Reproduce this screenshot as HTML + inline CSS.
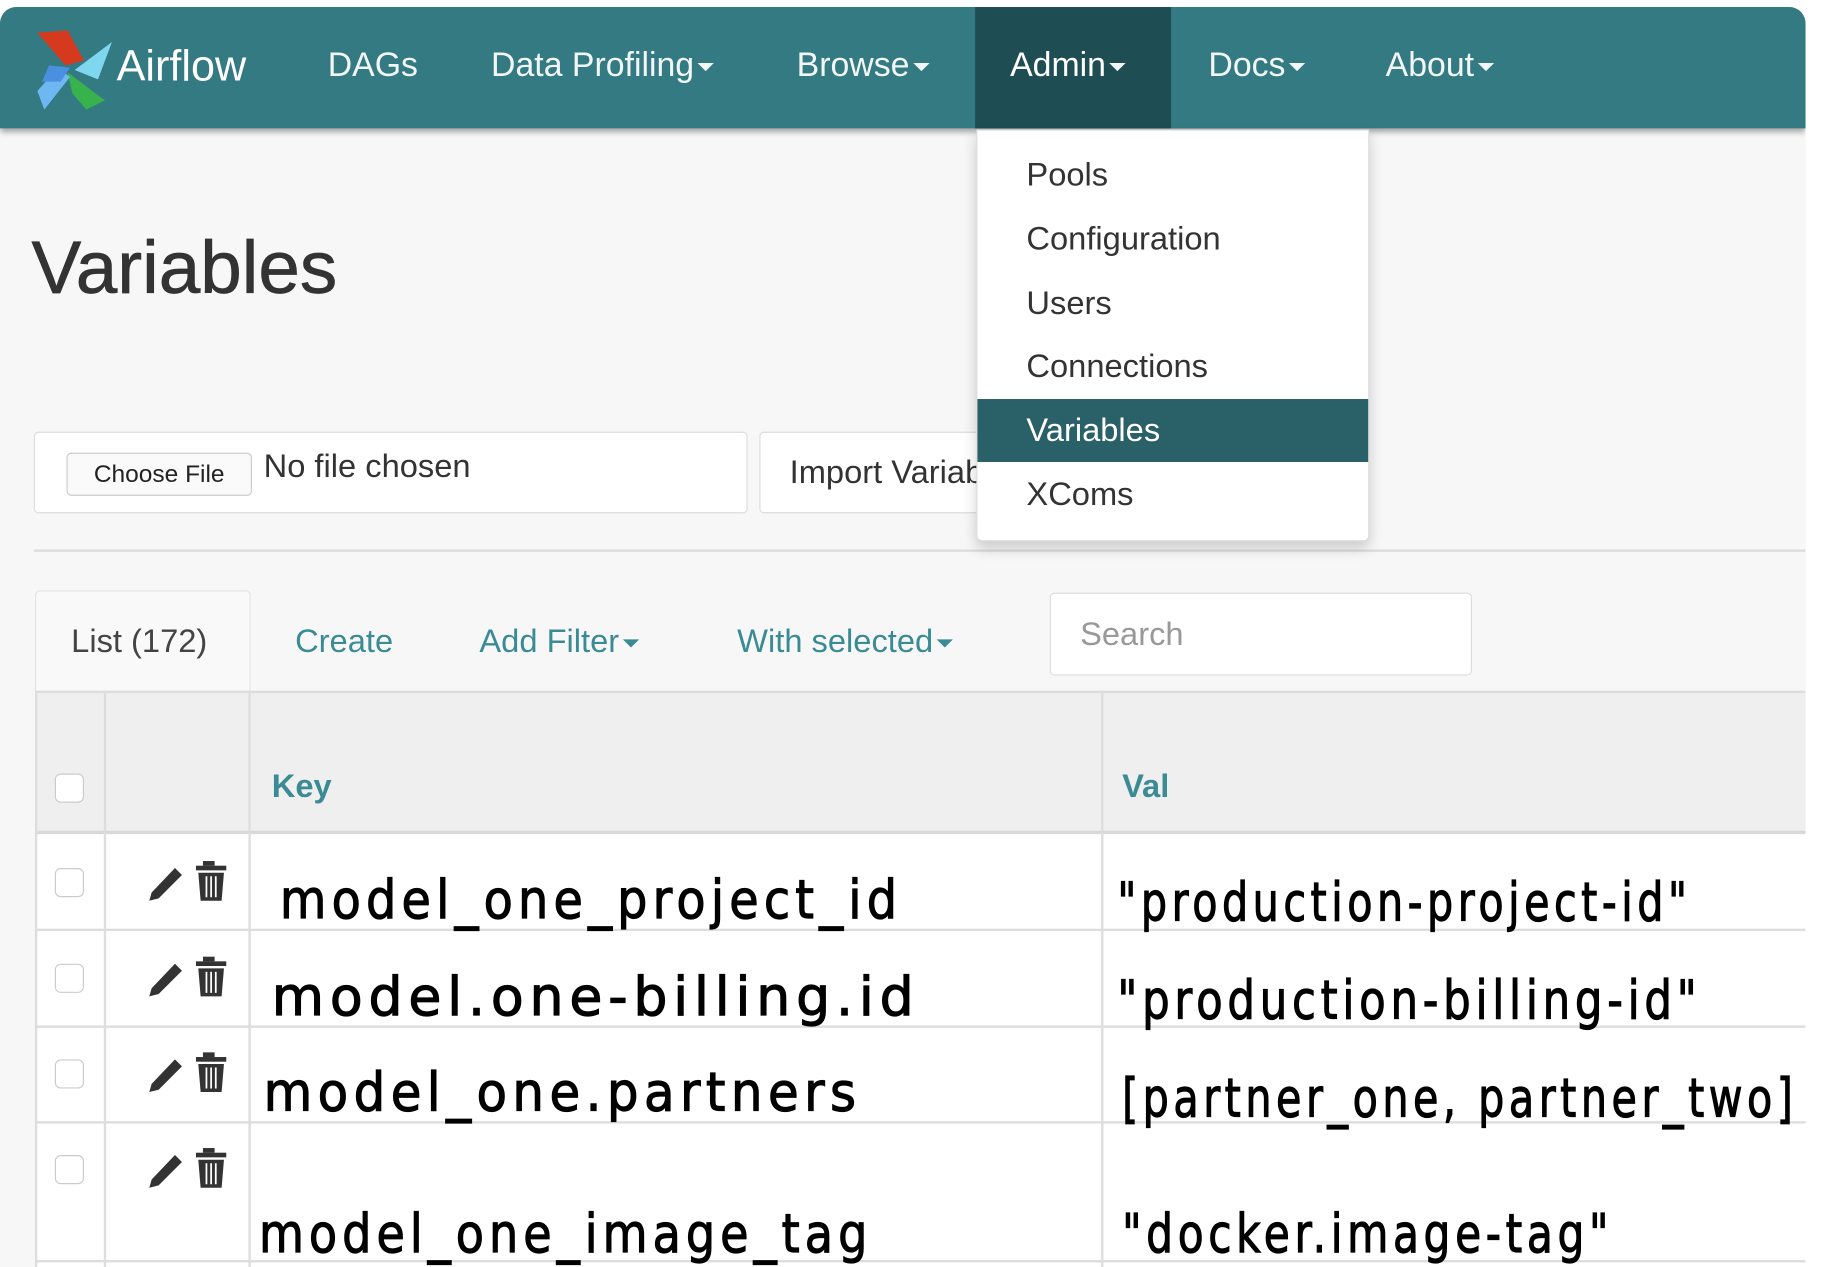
<!DOCTYPE html>
<html><head><meta charset="utf-8"><style>
html,body{margin:0;padding:0;background:#fff;width:1829px;height:1267px;overflow:hidden}
#w{position:absolute;left:0;top:0;width:1560px;height:1086px;transform:scale(1.1664,1.1667);transform-origin:0 0;font-family:"Liberation Sans",sans-serif}
.a{position:absolute;white-space:nowrap}
.pg{left:0;top:6px;width:1548px;height:1080px;background:#f7f7f7;border-radius:14px 14px 0 0;overflow:hidden}
.nav{left:0;top:0;width:1548px;height:104px;background:#347a82;box-shadow:0 3px 5px rgba(0,0,0,.35)}
.ni{color:#f2f6f6;font-size:29px;top:34px}
.car{display:inline-block;width:0;height:0;border-left:7px solid transparent;border-right:7px solid transparent;border-top:7px solid #f2f6f6;vertical-align:middle;margin-left:3px}
.dd{left:837px;top:111px;width:335px;height:351px;background:#fff;border:1px solid #ddd;border-radius:0 0 5px 5px;box-shadow:0 6px 12px rgba(0,0,0,.18)}
.di{font-size:28px;color:#333;left:42px}
.tl{color:#3a8b94;font-size:28px;top:532px}
.hw{font-family:"DejaVu Sans",sans-serif;color:#000;font-size:46px;transform-origin:0 0;letter-spacing:5px;-webkit-text-stroke:1px #000}
.cb{width:23px;height:23px;border:1.5px solid #ccc;border-radius:5px;background:#fff;left:47px}
.ln{background:#ddd}
</style></head><body><div id="w">
<div class="a pg">
<div class="a nav">
 <div class="a" style="left:836px;top:0;width:168px;height:104px;background:#1f4d54"></div>
 <svg class="a" style="left:28px;top:16px" width="72" height="76" viewBox="0 0 72 76">
  <polygon points="4,6 30,4 44,30 28,34" fill="#d63a1e"/>
  <polygon points="68,14 56,46 36,38" fill="#7fd6ef"/>
  <polygon points="30,40 62,64 46,72 34,58" fill="#37b24d"/>
  <polygon points="22,36 4,56 10,72 32,44" fill="#6fb7f2"/>
  <polygon points="14,34 32,36 24,48 8,48" fill="#4a8fe0"/>
 </svg>
 <div class="a" style="left:100px;top:30px;color:#fff;font-size:37px">Airflow</div>
 <div class="a ni" style="left:281px">DAGs</div>
 <div class="a ni" style="left:421px">Data Profiling<span class="car"></span></div>
 <div class="a ni" style="left:683px">Browse<span class="car"></span></div>
 <div class="a ni" style="left:866px;color:#fff">Admin<span class="car"></span></div>
 <div class="a ni" style="left:1036px">Docs<span class="car"></span></div>
 <div class="a ni" style="left:1188px">About<span class="car"></span></div>
</div>
<div class="a" style="left:27px;top:186px;font-size:64px;color:#333;-webkit-text-stroke:.6px #333">Variables</div>
<div class="a" style="left:29px;top:364px;width:610px;height:68px;background:#fff;border:1.5px solid #ddd;border-radius:4px"></div>
<div class="a" style="left:57px;top:382px;width:157px;height:35px;background:#fafafa;border:1px solid #ccc;border-radius:4px;font-size:21px;color:#222;text-align:center;line-height:35px">Choose File</div>
<div class="a" style="left:226px;top:378px;font-size:28px;color:#333">No file chosen</div>
<div class="a" style="left:651px;top:364px;width:220px;height:68px;background:#fff;border:1.5px solid #ddd;border-radius:4px"></div>
<div class="a" style="left:677px;top:383px;font-size:28px;color:#333">Import Variables</div>
<div class="a ln" style="left:29px;top:465px;width:1519px;height:2px"></div>
<div class="a" style="left:30px;top:500px;width:183px;height:92px;background:#f9f9f9;border:1.5px solid #e2e2e2;border-bottom:none;border-radius:4px 4px 0 0"></div>
<div class="a" style="left:61px;top:528px;font-size:28px;color:#444">List (172)</div>
<div class="a tl" style="left:253px;top:528px">Create</div>
<div class="a tl" style="left:411px;top:528px">Add Filter<span class="car" style="border-top-color:#3a8b94"></span></div>
<div class="a tl" style="left:632px;top:528px">With selected<span class="car" style="border-top-color:#3a8b94"></span></div>
<div class="a" style="left:900px;top:502px;width:360px;height:69px;background:#fff;border:1.5px solid #ddd;border-radius:4px"></div>
<div class="a" style="left:926px;top:522px;font-size:28px;color:#999">Search</div>
<div class="a" style="left:30px;top:586px;width:1518px;height:122px;background:#efefef"></div>
<div class="a ln" style="left:30px;top:586px;width:1518px;height:2px"></div>
<div class="a" style="left:30px;top:706px;width:1518px;height:3px;background:#d8d8d8"></div>
<div class="a" style="left:30px;top:709px;width:1518px;height:380px;background:#fff"></div>
<div class="a ln" style="left:30px;top:586px;width:2px;height:500px"></div>
<div class="a ln" style="left:89px;top:586px;width:2px;height:500px"></div>
<div class="a ln" style="left:213px;top:586px;width:2px;height:500px"></div>
<div class="a ln" style="left:944px;top:586px;width:2px;height:500px"></div>
<div class="a ln" style="left:30px;top:790px;width:1518px;height:2px"></div>
<div class="a ln" style="left:30px;top:873px;width:1518px;height:2px"></div>
<div class="a ln" style="left:30px;top:955px;width:1518px;height:2px"></div>
<div class="a ln" style="left:30px;top:1074px;width:1518px;height:2px"></div>
<div class="a cb" style="top:657px"></div>
<div class="a" style="left:233px;top:652px;font-size:28px;font-weight:bold;color:#3a8b94">Key</div>
<div class="a" style="left:962px;top:652px;font-size:28px;font-weight:bold;color:#3a8b94">Val</div>
<div class="a cb" style="top:738px"></div>
<div class="a cb" style="top:820px"></div>
<div class="a cb" style="top:902px"></div>
<div class="a cb" style="top:984px"></div>
<svg class="a" style="left:126px;top:726px" width="72" height="300" viewBox="0 0 72 300">
 <g id="ic">
  <path d="M4 33 L24 12 L30 18 L10 38 L2 40 Z" fill="#333"/>
  <rect x="48" y="6" width="10" height="4" fill="#333"/>
  <rect x="42" y="10" width="26" height="4" fill="#333"/>
  <path d="M44 16 H66 L64 40 H46 Z" fill="#333"/>
  <path d="M51 19 V37 M55 19 V37 M59 19 V37" stroke="#fff" stroke-width="1.5"/>
 </g>
 <use href="#ic" y="82"/><use href="#ic" y="164"/><use href="#ic" y="246"/>
</svg>
<div class="a hw" style="left:240px;top:738px;transform:scaleX(.89)">model_one_project_id</div>
<div class="a hw" style="left:958px;top:740px;transform:scaleX(.77)">"production-project-id"</div>
<div class="a hw" style="left:233px;top:821px;transform:scaleX(1)">model.one-billing.id</div>
<div class="a hw" style="left:958px;top:824px;transform:scaleX(.81)">"production-billing-id"</div>
<div class="a hw" style="left:226px;top:903px;transform:scaleX(.93)">model_one.partners</div>
<div class="a hw" style="left:962px;top:908px;transform:scaleX(.77)">[partner_one, partner_two]</div>
<div class="a hw" style="left:222px;top:1024px;transform:scaleX(.86)">model_one_image_tag</div>
<div class="a hw" style="left:962px;top:1024px;transform:scaleX(.79)">"docker.image-tag"</div>
</div>
<div class="a dd">
 <div class="a" style="left:0;top:230px;width:335px;height:54px;background:#2a6067"></div>
 <div class="a di" style="top:22px">Pools</div>
 <div class="a di" style="top:77px">Configuration</div>
 <div class="a di" style="top:132px">Users</div>
 <div class="a di" style="top:186px">Connections</div>
 <div class="a di" style="top:241px;color:#fff">Variables</div>
 <div class="a di" style="top:296px">XComs</div>
</div>
</div></body></html>
